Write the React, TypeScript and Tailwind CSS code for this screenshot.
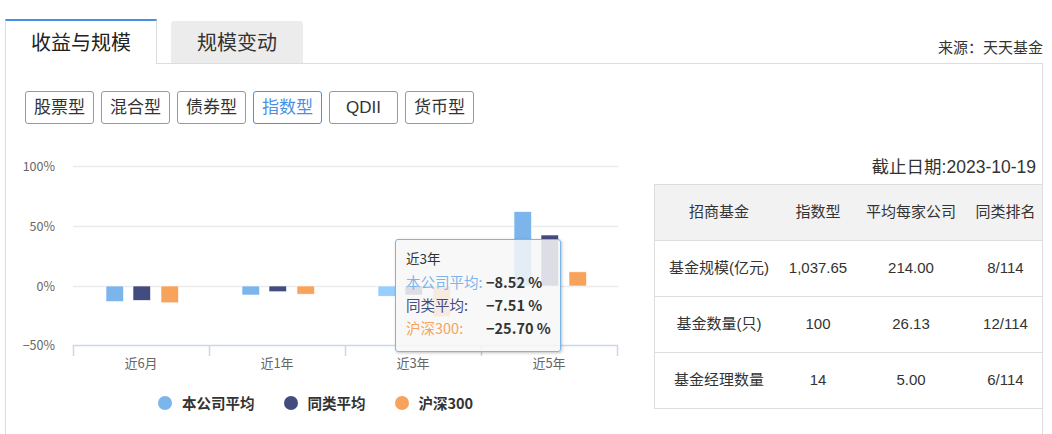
import React from 'react'

const cjk = { fontFamily: '"Noto Sans CJK SC", "Noto Sans", sans-serif' }
const arial = { fontFamily: '"Liberation Sans", "Noto Sans CJK SC", sans-serif' }

const fundTypes = ['股票型', '混合型', '债券型', '指数型', 'QDII', '货币型']

const COLORS = { mine: '#7cb5ec', peer: '#434c7e', hs300: '#f7a35c' }

// values in percent, scale: 50% = 60px, zero line at y=286
const series = [
  { label: '近6月', x: 73, values: [-13, -12, -14] },
  { label: '近1年', x: 209, values: [-7.5, -4.8, -6.8] },
  { label: '近3年', x: 345, values: [-8.52, -7.51, -25.7] },
  { label: '近5年', x: 481, values: [62, 42.5, 11.8] },
]

const rows = [
  ['基金规模(亿元)', '1,037.65', '214.00', '8/114'],
  ['基金数量(只)', '100', '26.13', '12/114'],
  ['基金经理数量', '14', '5.00', '6/114'],
]

const Chart = () => {
  const zero = 286
  const px = (v: number) => (v / 50) * 60
  const offsets = [33, 60, 88]
  const colors = [COLORS.mine, COLORS.peer, COLORS.hs300]
  return (
    <svg width={648} height={230} viewBox="6 150 648 230" className="block">
      {[166.5, 226.5, 286.5].map((y) => (
        <line key={y} x1={73} x2={618} y1={y} y2={y} stroke="#ebebeb" strokeWidth={1.5} />
      ))}
      <line x1={73} x2={618} y1={345.5} y2={345.5} stroke="#ccd6eb" strokeWidth={1.5} />
      {[73.5, 209.5, 345.5, 481.5, 617.5].map((x) => (
        <line key={x} x1={x} x2={x} y1={345} y2={356} stroke="#ccd6eb" strokeWidth={1.5} />
      ))}
      {[
        ['100%', 170.5],
        ['50%', 230.5],
        ['0%', 290.5],
        ['−50%', 349.5],
      ].map(([t, y]) => (
        <text key={t} x={55} y={y} textAnchor="end" fontSize={12.5} fill="#666" style={cjk}>
          {t}
        </text>
      ))}
      {series.map((s) =>
        s.values.map((v, i) => {
          const h = Math.abs(px(v))
          const y = v < 0 ? zero : zero - h
          const fill = s.label === '近3年' && i === 0 ? '#95ceff' : colors[i]
          return (
            <rect
              key={s.label + i}
              x={s.x + offsets[i]}
              y={y}
              width={17.5}
              height={h}
              fill={fill}
              stroke="#fff"
              strokeWidth={0.6}
            />
          )
        }),
      )}
      {series.map((s) => (
        <text key={s.label} x={s.x + 68} y={367.5} textAnchor="middle" fontSize={13} fill="#666" style={cjk}>
          {s.label}
        </text>
      ))}
    </svg>
  )
}

const Tooltip = () => (
  <div
    className="absolute left-[389px] top-[89px] h-[113px] w-[166px] whitespace-nowrap rounded-[3px] border border-[#7cb5ec] bg-[rgba(247,247,247,0.85)] pl-[10px] pt-[7px] text-[14.5px] leading-[23px] shadow-[1px_1px_3px_rgba(0,0,0,0.25)]"
    style={cjk}
  >
    <div className="text-[13.5px] text-[#333]">近3年</div>
    {[
      ['本公司平均:', '−8.52 %', 'text-[#7cb5ec]'],
      ['同类平均:', '−7.51 %', 'text-[#434c7e]'],
      ['沪深300:', '−25.70 %', 'text-[#f7a35c]'],
    ].map(([k, v, c]) => (
      <div key={k} className="flex">
        <span className={`w-[80px] shrink-0 ${c}`}>{k}</span>
        <span className="font-bold text-[#333]">{v}</span>
      </div>
    ))}
  </div>
)

export default function App() {
  return (
    <div className="h-[434px] w-[1052px] overflow-hidden bg-white text-[#333]" style={cjk}>
      <div className="flex items-end pl-[5px] pr-[9px] pt-[19px]">
        <div className="relative z-10 -mb-px flex h-[45px] w-[152px] items-center justify-center border-l border-r border-t-2 border-[#ddd] border-t-[#4a90e2] bg-white pb-[2px] text-[20px] text-[#222]">
          收益与规模
        </div>
        <div className="ml-[14px] flex h-[42px] w-[132px] items-center justify-center rounded-t-[3px] bg-[#ececec] text-[20px] text-[#333]">
          规模变动
        </div>
        <div className="ml-auto pb-[5px] text-[15px] text-[#333]">来源：天天基金</div>
      </div>

      <div className="ml-[5px] mr-[9px] h-[400px] border-l border-r border-t border-[#ddd]">
        <div className="flex gap-[7px] pl-[19px] pt-[27px]">
          {fundTypes.map((t) => (
            <div
              key={t}
              className={`flex h-[33px] w-[69px] items-center justify-center rounded-[3px] border text-[17px] ${
                t === '指数型' ? 'border-[#4a90e2] text-[#4a90e2]' : 'border-[#999] text-[#333]'
              }`}
              style={arial}
            >
              {t}
            </div>
          ))}
        </div>

        <div className="mt-[26px] flex">
          <div className="relative w-[648px]">
            <Chart />
            <Tooltip />
            <div className="flex h-[46px] items-center pl-[152px] text-[14.5px] font-bold text-[#333]">
              <span className="h-[14px] w-[14px] rounded-full bg-[#7cb5ec]" />
              <span className="ml-[10px]">本公司平均</span>
              <span className="ml-[29px] h-[14px] w-[14px] rounded-full bg-[#434c7e]" />
              <span className="ml-[10px]">同类平均</span>
              <span className="ml-[29px] h-[14px] w-[14px] rounded-full bg-[#f7a35c]" />
              <span className="ml-[10px]">沪深300</span>
            </div>
          </div>

          <div className="flex-1">
            <div className="flex h-[34px] items-center justify-end pr-[6px] text-[17.5px] text-[#333]" style={arial}>
              截止日期:2023-10-19
            </div>
            <div className="border-b border-l border-t border-[#ddd] text-[15px] text-[#333]" style={arial}>
              <div className="grid h-[55px] grid-cols-[128px_70px_116px_1fr] items-center bg-[#f2f2f2] text-center">
                <span>招商基金</span>
                <span>指数型</span>
                <span>平均每家公司</span>
                <span>同类排名</span>
              </div>
              {rows.map((r) => (
                <div
                  key={r[0]}
                  className="grid h-[56px] grid-cols-[128px_70px_116px_1fr] items-center border-t border-[#ddd] text-center"
                >
                  {r.map((c) => (
                    <span key={c}>{c}</span>
                  ))}
                </div>
              ))}
            </div>
          </div>
        </div>
      </div>
    </div>
  )
}
